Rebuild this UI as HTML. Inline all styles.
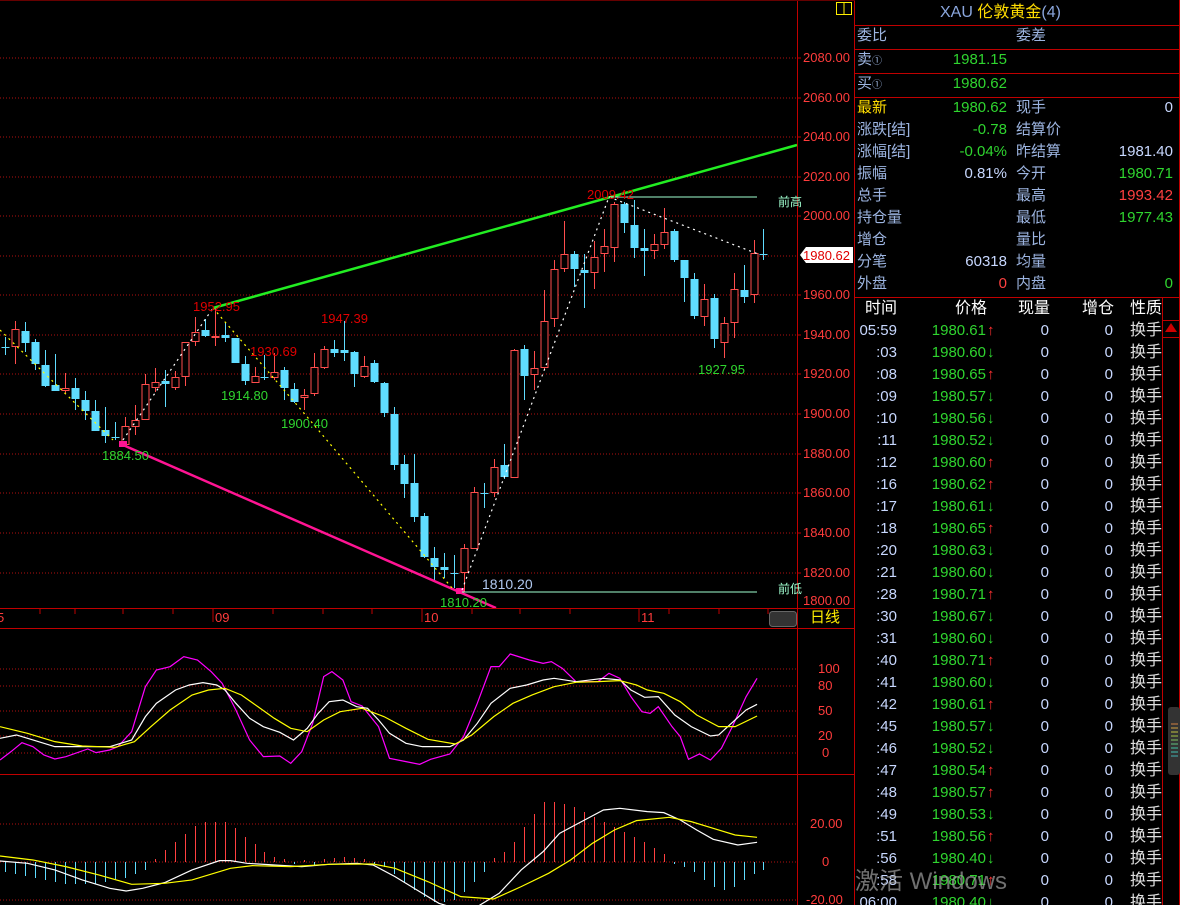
<!DOCTYPE html>
<html><head><meta charset="utf-8">
<style>
html,body{margin:0;padding:0;background:#000;width:1180px;height:905px;overflow:hidden;font-family:"Liberation Sans","Noto Sans CJK SC",sans-serif;}
#wrap{position:relative;width:1180px;height:905px;}
.t{position:absolute;white-space:nowrap;line-height:1;}
.ax{color:#ff3c3c;font-size:13px;}
.lb{color:#9cb4e0;font-size:15px;}
.g{color:#2fd52f;font-size:15px;}
.r{color:#ff4040;font-size:15px;}
.w{color:#c8d8ff;font-size:15px;}
.an{font-size:13px;}
</style></head><body><div id="wrap">
<svg id="chart" width="1180" height="905" style="position:absolute;left:0;top:0">
<g stroke="#b01010" stroke-dasharray="1,2" stroke-width="1">
<line x1="0" x2="797" y1="58" y2="58"/><line x1="0" x2="797" y1="98" y2="98"/><line x1="0" x2="797" y1="137" y2="137"/><line x1="0" x2="797" y1="177" y2="177"/><line x1="0" x2="797" y1="216" y2="216"/><line x1="0" x2="797" y1="256" y2="256"/><line x1="0" x2="797" y1="295" y2="295"/><line x1="0" x2="797" y1="335" y2="335"/><line x1="0" x2="797" y1="374" y2="374"/><line x1="0" x2="797" y1="414" y2="414"/><line x1="0" x2="797" y1="454" y2="454"/><line x1="0" x2="797" y1="493" y2="493"/><line x1="0" x2="797" y1="533" y2="533"/><line x1="0" x2="797" y1="573" y2="573"/>
<line x1="0" x2="797" y1="669" y2="669"/><line x1="0" x2="797" y1="686" y2="686"/><line x1="0" x2="797" y1="711" y2="711"/><line x1="0" x2="797" y1="736" y2="736"/><line x1="0" x2="797" y1="753" y2="753"/>
<line x1="0" x2="797" y1="824" y2="824"/><line x1="0" x2="797" y1="862" y2="862"/><line x1="0" x2="797" y1="900" y2="900"/>
</g>
<g id="candles"></g>
<g id="hist"></g>
<line x1="213" y1="308" x2="797" y2="145" stroke="#22ee22" stroke-width="2.5"/>
<line x1="123" y1="445" x2="496" y2="608" stroke="#ff1493" stroke-width="2.5"/>
<rect x="119" y="441" width="8" height="6" fill="#ff1493"/>
<rect x="456" y="588" width="8" height="6" fill="#ff1493"/>
<line x1="609" y1="197" x2="757" y2="197" stroke="#a0ffd0" stroke-width="1"/>
<line x1="462" y1="592" x2="757" y2="592" stroke="#a0ffd0" stroke-width="1"/>
<g fill="none" stroke-dasharray="2,4" stroke-width="1.2">
<polyline points="0,330 113,440" stroke="#ffff00"/>
<polyline points="123,440 213,308" stroke="#ffffff"/>
<polyline points="213,308 303,412 452,588" stroke="#ffff00"/>
<polyline points="462,590 609,197" stroke="#ffffff"/>
<polyline points="609,197 758,254" stroke="#ffffff"/>
</g>
<g transform="translate(0,600) scale(0.5486,0.3333)" fill="none">
<polyline vector-effect="non-scaling-stroke" stroke="#ff00ff" stroke-width="1.2" points="0,480 20,455 40,428 60,440 80,465 100,477 120,470 160,447 175,458 200,450 215,440 240,395 265,260 285,210 310,200 335,170 360,180 385,215 405,250 430,330 455,420 480,470 510,468 530,490 550,455 570,370 590,230 605,215 625,240 640,305 660,318 690,380 710,475 740,485 765,493 785,478 820,462 845,410 870,310 895,200 910,200 930,162 965,180 990,190 1005,185 1025,205 1050,245 1090,245 1110,220 1130,235 1150,290 1170,335 1185,340 1200,320 1225,380 1240,410 1255,478 1275,462 1295,480 1315,445 1335,380 1360,290 1380,235"/>
<polyline vector-effect="non-scaling-stroke" stroke="#ffffff" stroke-width="1.2" points="0,415 30,405 60,420 100,440 150,440 200,440 240,420 265,350 285,310 320,270 345,255 370,248 395,255 410,270 430,310 455,355 480,380 510,397 535,420 560,385 580,340 600,305 625,300 650,320 670,325 690,360 710,400 740,430 770,440 820,440 845,420 870,370 895,310 930,265 960,255 990,240 1010,235 1050,245 1100,235 1130,240 1150,270 1175,292 1200,290 1230,345 1260,380 1295,408 1310,405 1330,375 1360,330 1380,313"/>
<polyline vector-effect="non-scaling-stroke" stroke="#ffff00" stroke-width="1.2" points="0,380 50,400 100,425 150,438 210,442 245,425 275,380 310,330 350,285 380,270 410,265 440,285 470,320 500,355 530,385 560,395 590,360 620,335 660,325 700,350 740,385 780,418 830,432 860,405 900,350 935,310 970,285 1010,260 1050,247 1090,245 1130,242 1160,255 1180,270 1210,280 1240,305 1270,345 1310,380 1340,380 1380,348"/>
<polyline vector-effect="non-scaling-stroke" stroke="#ffffff" stroke-width="1.2" points="0,783 50,790 100,810 150,840 200,865 230,873 260,865 300,848 350,810 400,782 420,782 450,790 500,795 550,800 600,793 650,790 680,795 720,830 760,870 800,910 830,925 870,920 910,880 950,810 990,755 1020,700 1060,665 1100,630 1130,625 1180,635 1210,638 1240,660 1270,690 1300,718 1345,735 1380,727"/>
<polyline vector-effect="non-scaling-stroke" stroke="#ffff00" stroke-width="1.2" points="0,768 60,780 120,800 180,825 240,853 300,850 350,840 420,805 460,797 530,800 600,793 680,792 720,805 780,845 840,890 900,897 950,860 1000,820 1040,780 1080,730 1120,690 1160,662 1220,652 1260,665 1300,685 1340,705 1380,712"/>
</g>
<g stroke="#c00000" stroke-width="1">
<line x1="797.5" y1="0" x2="797.5" y2="905"/>
<line x1="854.5" y1="0" x2="854.5" y2="905"/>
<line x1="0" y1="608.5" x2="855" y2="608.5"/>
<line x1="0" y1="628.5" x2="855" y2="628.5"/>
<line x1="0" y1="774.5" x2="855" y2="774.5"/>
<line x1="855" y1="25.5" x2="1180" y2="25.5"/>
<line x1="855" y1="49.5" x2="1180" y2="49.5"/>
<line x1="855" y1="73.5" x2="1180" y2="73.5"/>
<line x1="855" y1="97.5" x2="1180" y2="97.5"/>
<line x1="855" y1="297.5" x2="1180" y2="297.5"/>
<line x1="1162.5" y1="298" x2="1162.5" y2="905"/>
<line x1="1163" y1="320.5" x2="1180" y2="320.5"/>
<line x1="1163" y1="337.5" x2="1180" y2="337.5"/>
<line x1="1179.5" y1="0" x2="1179.5" y2="905"/>
<line x1="0" y1="0.5" x2="855" y2="0.5" stroke="#600"/>
</g>
<g stroke="#c00000">
<line x1="797" x2="801" y1="58" y2="58"/><line x1="797" x2="801" y1="98" y2="98"/><line x1="797" x2="801" y1="137" y2="137"/><line x1="797" x2="801" y1="177" y2="177"/><line x1="797" x2="801" y1="216" y2="216"/><line x1="797" x2="801" y1="295" y2="295"/><line x1="797" x2="801" y1="335" y2="335"/><line x1="797" x2="801" y1="374" y2="374"/><line x1="797" x2="801" y1="414" y2="414"/><line x1="797" x2="801" y1="454" y2="454"/><line x1="797" x2="801" y1="493" y2="493"/><line x1="797" x2="801" y1="533" y2="533"/><line x1="797" x2="801" y1="573" y2="573"/>
<line x1="40" x2="40" y1="608" y2="614"/><line x1="75" x2="75" y1="608" y2="614"/><line x1="123" x2="123" y1="608" y2="614"/><line x1="173" x2="173" y1="608" y2="614"/><line x1="213" x2="213" y1="608" y2="622"/><line x1="273" x2="273" y1="608" y2="614"/><line x1="323" x2="323" y1="608" y2="614"/><line x1="372" x2="372" y1="608" y2="614"/><line x1="422" x2="422" y1="608" y2="622"/><line x1="472" x2="472" y1="608" y2="614"/><line x1="520" x2="520" y1="608" y2="614"/><line x1="570" x2="570" y1="608" y2="614"/><line x1="639" x2="639" y1="608" y2="622"/><line x1="669" x2="669" y1="608" y2="614"/><line x1="719" x2="719" y1="608" y2="614"/><line x1="768" x2="768" y1="608" y2="614"/>
</g>
<rect x="769.5" y="611.5" width="27" height="15" rx="3" fill="#333" stroke="#666"/>
<rect x="836.5" y="2.5" width="15" height="12" fill="none" stroke="#ffee00"/>
<line x1="844" y1="3" x2="844" y2="14" stroke="#ffee00"/>
<polygon points="800,255 806,247 853,247 853,263 806,263" fill="#fff"/>
<polygon points="1165,332 1171,323 1177,332" fill="#cc0000"/>
<rect x="1168" y="707" width="12" height="68" rx="3" fill="#333"/>
<g stroke-width="1">
<line x1="1171" x2="1178" y1="724" y2="724" stroke="#d08040"/><line x1="1171" x2="1178" y1="728" y2="728" stroke="#d0a040"/><line x1="1171" x2="1178" y1="732" y2="732" stroke="#c0c040"/><line x1="1171" x2="1178" y1="736" y2="736" stroke="#a0c040"/><line x1="1171" x2="1178" y1="740" y2="740" stroke="#80c060"/><line x1="1171" x2="1178" y1="744" y2="744" stroke="#60c080"/><line x1="1171" x2="1178" y1="748" y2="748" stroke="#40c0a0"/><line x1="1171" x2="1178" y1="752" y2="752" stroke="#40c0b0"/><line x1="1171" x2="1178" y1="756" y2="756" stroke="#40b0b0"/>
</g>
</svg>

<div class="t ax" style="left:803px;top:51px">2080.00</div>
<div class="t ax" style="left:803px;top:91px">2060.00</div>
<div class="t ax" style="left:803px;top:130px">2040.00</div>
<div class="t ax" style="left:803px;top:170px">2020.00</div>
<div class="t ax" style="left:803px;top:209px">2000.00</div>
<div class="t ax" style="left:803px;top:249px;color:#e00000">1980.62</div>
<div class="t ax" style="left:803px;top:288px">1960.00</div>
<div class="t ax" style="left:803px;top:328px">1940.00</div>
<div class="t ax" style="left:803px;top:367px">1920.00</div>
<div class="t ax" style="left:803px;top:407px">1900.00</div>
<div class="t ax" style="left:803px;top:447px">1880.00</div>
<div class="t ax" style="left:803px;top:486px">1860.00</div>
<div class="t ax" style="left:803px;top:526px">1840.00</div>
<div class="t ax" style="left:803px;top:566px">1820.00</div>
<div class="t ax" style="left:803px;top:594px">1800.00</div>
<div class="t ax" style="left:818px;top:662px">100</div>
<div class="t ax" style="left:818px;top:679px">80</div>
<div class="t ax" style="left:818px;top:704px">50</div>
<div class="t ax" style="left:818px;top:729px">20</div>
<div class="t ax" style="left:822px;top:746px">0</div>
<div class="t ax" style="left:810px;top:817px">20.00</div>
<div class="t ax" style="left:822px;top:855px">0</div>
<div class="t ax" style="left:806px;top:893px">-20.00</div>
<div class="t" style="left:778px;top:196px;color:#a0ffd0;font-size:12px">前高</div>
<div class="t" style="left:778px;top:583px;color:#a0ffd0;font-size:12px">前低</div>
<div class="t ax" style="left:-3px;top:611px">5</div>
<div class="t ax" style="left:215px;top:611px">09</div>
<div class="t ax" style="left:424px;top:611px">10</div>
<div class="t ax" style="left:641px;top:611px">11</div>
<div class="t" style="left:810px;top:610px;color:#ffee00;font-size:15px">日线</div>
<div class="t an" style="left:193px;top:300px;color:#e00000">1952.95</div>
<div class="t an" style="left:250px;top:345px;color:#e00000">1930.69</div>
<div class="t an" style="left:321px;top:312px;color:#e00000">1947.39</div>
<div class="t an" style="left:587px;top:188px;color:#e00000">2009.42</div>
<div class="t an" style="left:221px;top:389px;color:#2fd52f">1914.80</div>
<div class="t an" style="left:281px;top:417px;color:#2fd52f">1900.40</div>
<div class="t an" style="left:102px;top:449px;color:#2fd52f">1884.50</div>
<div class="t an" style="left:440px;top:596px;color:#2fd52f">1810.20</div>
<div class="t an" style="left:698px;top:363px;color:#2fd52f">1927.95</div>
<div class="t" style="left:482px;top:577px;color:#b0c8f0;font-size:14px">1810.20</div>

<div class="t" style="left:940px;top:5px;font-size:16px"><span style="color:#8aa6dd">XAU </span><span style="color:#ffdd00">伦敦黄金</span><span style="color:#8aa6dd">(4)</span></div>
<div class="t lb" style="left:857px;top:28px">委比</div>
<div class="t lb" style="left:1016px;top:28px">委差</div>
<div class="t lb" style="left:857px;top:52px">卖<span style="font-size:10px">①</span></div>
<div class="t g" style="right:173px;top:52px">1981.15</div>
<div class="t lb" style="left:857px;top:76px">买<span style="font-size:10px">①</span></div>
<div class="t g" style="right:173px;top:76px">1980.62</div>
<div class="t" style="left:857px;top:100px;color:#ffdd00;font-size:15px">最新</div>
<div class="t g" style="right:173px;top:100px">1980.62</div>
<div class="t lb" style="left:1016px;top:100px">现手</div>
<div class="t w" style="right:7px;top:100px">0</div>
<div class="t lb" style="left:857px;top:122px">涨跌[结]</div>
<div class="t g" style="right:173px;top:122px">-0.78</div>
<div class="t lb" style="left:1016px;top:122px">结算价</div>
<div class="t lb" style="left:857px;top:144px">涨幅[结]</div>
<div class="t g" style="right:173px;top:144px">-0.04%</div>
<div class="t lb" style="left:1016px;top:144px">昨结算</div>
<div class="t w" style="right:7px;top:144px">1981.40</div>
<div class="t lb" style="left:857px;top:166px">振幅</div>
<div class="t w" style="right:173px;top:166px">0.81%</div>
<div class="t lb" style="left:1016px;top:166px">今开</div>
<div class="t g" style="right:7px;top:166px">1980.71</div>
<div class="t lb" style="left:857px;top:188px">总手</div>
<div class="t lb" style="left:1016px;top:188px">最高</div>
<div class="t r" style="right:7px;top:188px">1993.42</div>
<div class="t lb" style="left:857px;top:210px">持仓量</div>
<div class="t lb" style="left:1016px;top:210px">最低</div>
<div class="t g" style="right:7px;top:210px">1977.43</div>
<div class="t lb" style="left:857px;top:232px">增仓</div>
<div class="t lb" style="left:1016px;top:232px">量比</div>
<div class="t lb" style="left:857px;top:254px">分笔</div>
<div class="t w" style="right:173px;top:254px">60318</div>
<div class="t lb" style="left:1016px;top:254px">均量</div>
<div class="t lb" style="left:857px;top:276px">外盘</div>
<div class="t r" style="right:173px;top:276px">0</div>
<div class="t lb" style="left:1016px;top:276px">内盘</div>
<div class="t g" style="right:7px;top:276px">0</div>
<div class="t" style="left:865px;top:301px;color:#fff;font-size:16px">时间</div>
<div class="t" style="left:955px;top:301px;color:#fff;font-size:16px">价格</div>
<div class="t" style="left:1018px;top:301px;color:#fff;font-size:16px">现量</div>
<div class="t" style="left:1082px;top:301px;color:#fff;font-size:16px">增仓</div>
<div class="t" style="left:1130px;top:301px;color:#fff;font-size:16px">性质</div>
<div id="rows"></div>
<div class="t" style="left:855px;top:870px;color:rgba(160,160,160,0.7);font-size:24px">激活 Windows</div>

<script>
var C=[
['c',347,348,337,355],['r',329,346,321,364],['c',331,343,322,352],['c',342,364,339,370],['c',365,386,350,387],['c',385,391,354,391],['r',388,390,373,393],['c',388,399,378,410],['c',400,411,391,420],['c',411,431,400,431],
['c',430,436,407,443],['c',437,438,422,440],['r',426,444,417,445],['r',420,426,405,435],['r',384,419,374,419],['r',382,387,368,392],['c',381,384,370,407],['r',377,387,371,390],['r',342,376,342,386],['r',332,341,317,346],
['c',330,336,319,337],['r',336,337,308,346],['c',335,338,323,342],['c',338,363,338,363],['c',364,381,356,385],['r',376,382,367,382],['c',377,378,355,380],['r',372,377,353,380],['c',370,388,367,400],['c',389,402,383,403],
['r',395,397,389,410],['r',367,393,353,396],['r',349,367,346,369],['c',349,353,340,357],['c',350,353,321,361],['c',352,374,351,387],['r',366,376,356,378],['c',363,382,360,383],['c',383,413,382,417],['c',414,465,407,470],
['c',464,484,455,498],['c',483,517,454,522],['c',516,557,513,558],['c',558,567,547,582],['c',567,570,553,578],['c',573,574,555,588],['r',548,572,544,592],['r',492,548,487,548],['c',493,494,483,508],['r',467,492,459,497],
['c',465,477,444,479],['r',350,477,349,477],['c',349,376,345,400],['r',368,374,351,390],['r',321,367,290,370],['r',269,318,260,327],['r',254,268,221,272],['c',254,269,251,287],['c',270,273,254,308],['r',257,272,241,289],
['r',246,253,229,272],['r',204,247,202,262],['c',204,223,202,233],['c',225,248,200,258],['c',248,251,229,276],['r',244,250,234,259],['r',232,244,208,249],['c',231,260,229,262],['c',260,278,260,302],['c',279,316,273,319],
['r',299,316,284,326],['c',298,339,294,348],['r',323,342,317,358],['r',289,322,273,338],['c',290,297,265,303],['r',253,294,240,303],['c',254,255,229,260]];
var s='';
C.forEach(function(c,i){var x=Math.round(5+9.98*i)+0.5;var col=c[0]=='r'?'#ff4d4d':'#5fdcff';
s+='<line x1="'+x+'" x2="'+x+'" y1="'+c[3]+'" y2="'+c[4]+'" stroke="'+col+'"/>';
var h=Math.max(1,c[2]-c[1]);
if(c[0]=='r') s+='<rect x="'+(x-3.5)+'" y="'+(c[1]+0.5)+'" width="7" height="'+h+'" fill="#000" stroke="'+col+'"/>';
else s+='<rect x="'+(x-4)+'" y="'+c[1]+'" width="8" height="'+h+'" fill="'+col+'"/>';});
document.getElementById('candles').innerHTML=s;
var H=[10,12,14,16,18,20,22,22,22,22,20,18,16,12,8,-3,-12,-20,-28,-36,-40,-40,-40,-34,-25,-18,-10,-5,-3,2,-2,3,-3,-4,-5,-4,-3,2,5,12,20,28,35,40,40,38,30,20,10,-4,-10,-20,-35,-48,-60,-60,-58,-55,-50,-45,-40,-35,-30,-25,-20,-14,-8,2,5,10,18,25,28,25,18,12,8];
var t='';H.forEach(function(v,i){var x=Math.round(5+9.98*i)+0.5;var col=v<0?'#ff4040':'#5fdcff';t+='<line x1="'+x+'" x2="'+x+'" y1="862" y2="'+(862+v)+'" stroke="'+col+'"/>';});
document.getElementById('hist').innerHTML=t;
var R=[['05:59','61',1],[':03','60',0],[':08','65',1],[':09','57',0],[':10','56',0],[':11','52',0],[':12','60',1],[':16','62',1],[':17','61',0],[':18','65',1],[':20','63',0],[':21','60',0],[':28','71',1],[':30','67',0],[':31','60',0],[':40','71',1],[':41','60',0],[':42','61',1],[':45','57',0],[':46','52',0],[':47','54',1],[':48','57',1],[':49','53',0],[':51','56',1],[':56','40',0],[':58','71',1],['06:00','40',0]];
var u='';R.forEach(function(r,k){var y=323+22*k;
u+='<div class="t w" style="right:283px;top:'+y+'px">'+r[0]+'</div>';
u+='<div class="t g" style="right:194px;top:'+y+'px">1980.'+r[1]+'</div>';
u+='<div class="t" style="left:987px;top:'+y+'px;font-size:15px;color:'+(r[2]?'#ff3030':'#2fd52f')+'">'+(r[2]?'↑':'↓')+'</div>';
u+='<div class="t w" style="right:131px;top:'+y+'px">0</div>';
u+='<div class="t w" style="right:67px;top:'+y+'px">0</div>';
u+='<div class="t" style="left:1130px;top:'+y+'px;color:#e0e0e0;font-size:16px">换手</div>';});
document.getElementById('rows').innerHTML=u;
</script>
</div></body></html>
